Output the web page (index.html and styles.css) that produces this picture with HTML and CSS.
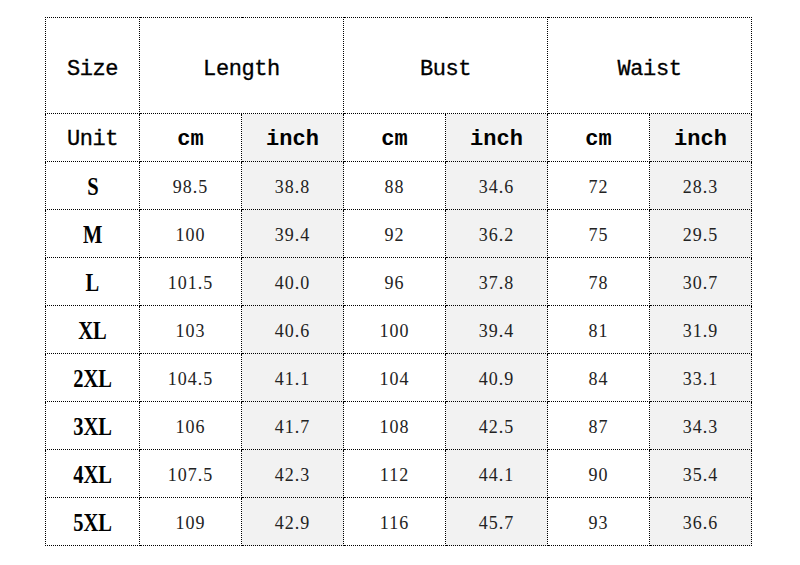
FILE: index.html
```html
<!DOCTYPE html>
<html>
<head>
<meta charset="utf-8">
<link rel="stylesheet" href="styles.css">
</head>
<body>
<table class="chart">
  <colgroup>
    <col class="c-size"><col class="c-val"><col class="c-val"><col class="c-val"><col class="c-val"><col class="c-val"><col class="c-val">
  </colgroup>
  <tr class="head">
    <td class="h">Size</td>
    <td class="h" colspan="2">Length</td>
    <td class="h" colspan="2">Bust</td>
    <td class="h" colspan="2">Waist</td>
  </tr>
  <tr class="unit">
    <td class="h">Unit</td>
    <td class="u">cm</td><td class="u g">inch</td>
    <td class="u">cm</td><td class="u g">inch</td>
    <td class="u">cm</td><td class="u g">inch</td>
  </tr>
  <tr><td class="s"><span>S</span></td><td>98.5</td><td class="g">38.8</td><td>88</td><td class="g">34.6</td><td>72</td><td class="g">28.3</td></tr>
  <tr><td class="s"><span>M</span></td><td>100</td><td class="g">39.4</td><td>92</td><td class="g">36.2</td><td>75</td><td class="g">29.5</td></tr>
  <tr><td class="s"><span>L</span></td><td>101.5</td><td class="g">40.0</td><td>96</td><td class="g">37.8</td><td>78</td><td class="g">30.7</td></tr>
  <tr><td class="s"><span>XL</span></td><td>103</td><td class="g">40.6</td><td>100</td><td class="g">39.4</td><td>81</td><td class="g">31.9</td></tr>
  <tr><td class="s"><span>2XL</span></td><td>104.5</td><td class="g">41.1</td><td>104</td><td class="g">40.9</td><td>84</td><td class="g">33.1</td></tr>
  <tr><td class="s"><span>3XL</span></td><td>106</td><td class="g">41.7</td><td>108</td><td class="g">42.5</td><td>87</td><td class="g">34.3</td></tr>
  <tr><td class="s"><span>4XL</span></td><td>107.5</td><td class="g">42.3</td><td>112</td><td class="g">44.1</td><td>90</td><td class="g">35.4</td></tr>
  <tr><td class="s"><span>5XL</span></td><td>109</td><td class="g">42.9</td><td>116</td><td class="g">45.7</td><td>93</td><td class="g">36.6</td></tr>
</table>
</body>
</html>
```
FILE: styles.css
```css
html, body {
  margin: 0;
  padding: 0;
  background: #fff;
}
body {
  padding: 17px 0 0 45px;
}
.chart {
  border-collapse: collapse;
  table-layout: fixed;
  width: 707px;
  font-family: "Liberation Serif", serif;
  font-size: 18px;
  color: #222;
}
.c-size { width: 94px; }
.c-val { width: 102px; }
.chart tr {
  height: 48px;
}
.chart tr.head {
  height: 96px;
}
.chart td {
  border: 1px dotted #000;
  padding: 2px 0 0 0;
  line-height: 20px;
  text-align: center;
  vertical-align: middle;
  letter-spacing: 1px;
}
.chart td.h {
  font-family: "Liberation Mono", monospace;
  font-size: 22px;
  color: #000;
  letter-spacing: -0.4px;
  padding-top: 4px;
  -webkit-text-stroke: 0.3px #000;
}
.chart tr.head td.h {
  padding-top: 8px;
}
.chart td.u {
  font-family: "Liberation Mono", monospace;
  font-size: 22px;
  font-weight: bold;
  color: #000;
  letter-spacing: 0;
  padding-top: 4px;
}
.chart td.g {
  background: #f2f2f2;
}
.chart td.s {
  color: #000;
  padding-top: 4px;
}
.chart td.s span {
  display: inline-block;
  font-size: 25px;
  font-weight: bold;
  letter-spacing: 0;
  transform: scaleX(0.82);
}
```
